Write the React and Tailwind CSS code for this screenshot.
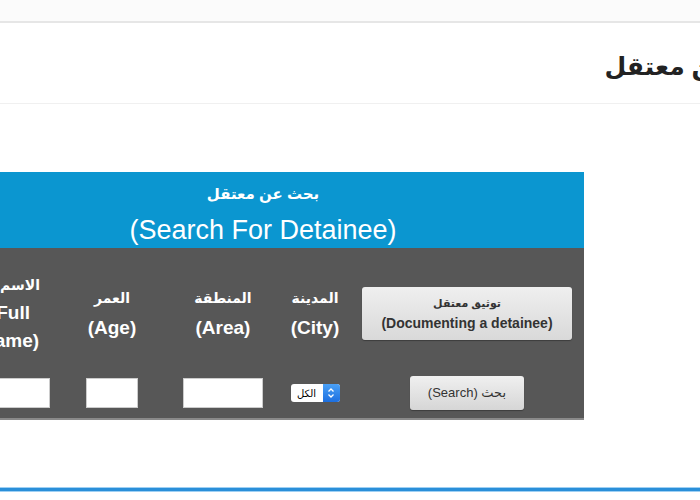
export default function App() {
  const font = { fontFamily: '"Liberation Sans", "DejaVu Sans", sans-serif' }
  return (
    <div className="w-[700px] h-[500px] overflow-hidden bg-white relative" style={font}>
      {/* top page strip */}
      <div className="h-[21px] bg-[#fbfbfb]" />
      <div className="h-[2px] bg-[#e6e6e6]" />

      {/* page title */}
      <div dir="rtl" className="h-[80px] flex items-center mr-[-92px] pt-[6px]">
        <h1 className="text-[25px] font-bold text-[#222] leading-none whitespace-nowrap">بحث عن معتقل</h1>
      </div>
      <div className="h-px bg-[#f0f0f0]" />

      {/* search panel */}
      <div className="mt-[68px] ml-[-58px] w-[642px]">
        <div className="h-[76px] bg-[#0b96d0] flex flex-col items-center justify-center text-white pt-[10px]">
          <div className="text-[15px] font-bold leading-[22px]">بحث عن معتقل</div>
          <div className="text-[27px] leading-[34px] mt-[8px]">(Search For Detainee)</div>
        </div>
        <div dir="rtl" className="h-[172px] bg-[#575757] border-b-2 border-[#8a8a8a] text-white font-bold">
          <div className="flex h-[126px] items-center pt-[4px]">
            <div className="w-[234px] shrink-0 flex justify-center">
              <button className="w-[210px] h-[53px] rounded-[3px] bg-gradient-to-b from-[#efefef] to-[#d9d9d9] text-[#333] font-bold shadow-[0_1px_1px_rgba(0,0,0,0.3)]">
                <div className="text-[11px] leading-[20px]">توثيق معتقل</div>
                <div dir="ltr" className="text-[14px] leading-[20px]">(Documenting a detainee)</div>
              </button>
            </div>
            <div className="w-[70px] shrink-0 text-center text-[19px] leading-[29px]">
              <div className="text-[14px]">المدينة</div>
              <div dir="ltr">(City)</div>
            </div>
            <div className="w-[114px] shrink-0 text-center text-[19px] leading-[29px]">
              <div className="text-[14px]">المنطقة</div>
              <div dir="ltr">(Area)</div>
            </div>
            <div className="w-[108px] shrink-0 text-center text-[19px] leading-[29px]">
              <div className="text-[14px]">العمر</div>
              <div dir="ltr">(Age)</div>
            </div>
            <div className="w-[116px] shrink-0 flex justify-center pl-[20px]">
              <div className="w-[60px] text-center text-[19px] leading-[28px]">
                <div className="text-[14px] whitespace-nowrap flex justify-start">الاسم الكامل</div>
                <div dir="ltr">(Full Name)</div>
              </div>
            </div>
          </div>
          <div className="flex h-[46px] items-center pb-[8px]">
            <div className="w-[234px] shrink-0 flex justify-center">
              <button className="w-[114px] h-[34px] rounded-[3px] bg-gradient-to-b from-[#f0f0f0] to-[#d6d6d6] text-[#333] text-[13px] font-normal shadow-[0_1px_1px_rgba(0,0,0,0.3)]">
                بحث (Search)
              </button>
            </div>
            <div className="w-[70px] shrink-0 flex justify-center">
              <div className="w-[49px] h-[18px] flex bg-white rounded-[3px] overflow-hidden">
                <div className="w-[17px] bg-gradient-to-b from-[#4aa0f5] to-[#1d6fe0] flex flex-col items-center justify-center">
                  <svg width="8" height="12" viewBox="0 0 8 12">
                    <path d="M1.5 4.5 L4 2 L6.5 4.5 M1.5 7.5 L4 10 L6.5 7.5" stroke="white" strokeWidth="1.3" fill="none" />
                  </svg>
                </div>
                <div className="flex-1 flex items-center justify-center text-[10px] text-black font-normal">الكل</div>
              </div>
            </div>
            <div className="w-[114px] shrink-0 flex justify-center">
              <input className="w-[80px] h-[30px] bg-white border border-[#ccc]" />
            </div>
            <div className="w-[108px] shrink-0 flex justify-center">
              <input className="w-[52px] h-[30px] bg-white border border-[#ccc]" />
            </div>
            <div className="w-[116px] shrink-0 flex justify-center pl-[10px]">
              <input className="w-[90px] h-[30px] bg-white border border-[#ccc]" />
            </div>
          </div>
        </div>
      </div>

      {/* bottom blue rule */}
      <div className="mt-[67px] h-[1px] bg-[#9fd0f3]" />
      <div className="h-[3px] bg-[#2a8fd9]" />
      <div className="h-[1px] bg-[#9fd0f3]" />
    </div>
  )
}
